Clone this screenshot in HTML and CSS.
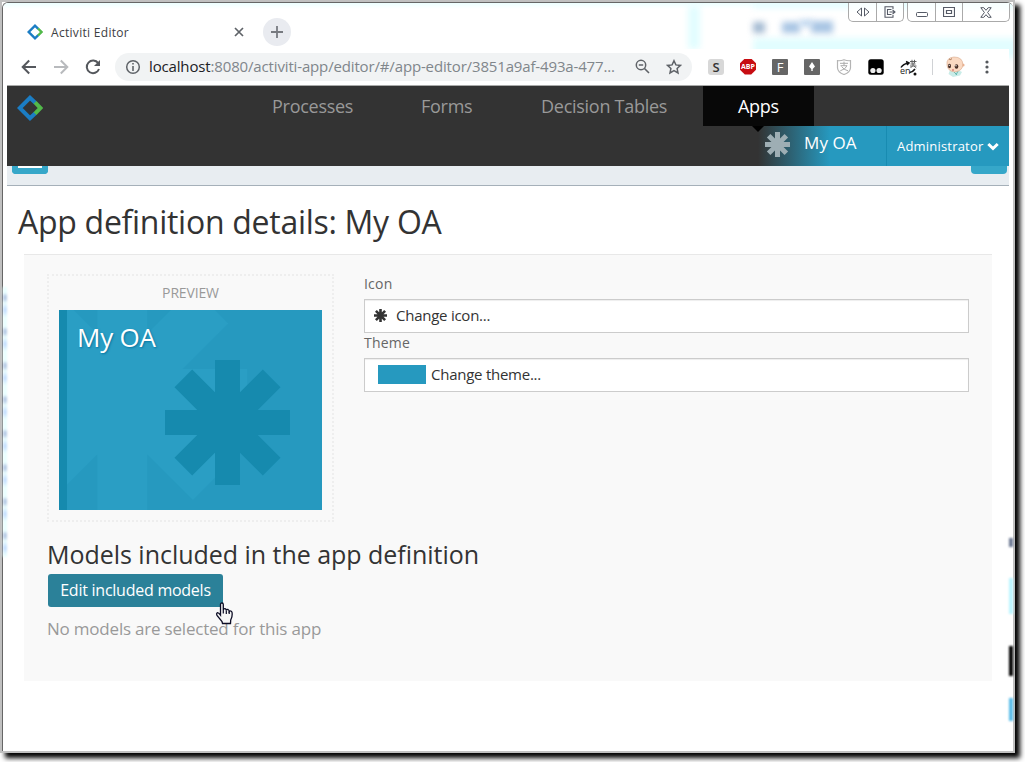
FILE: index.html
```html
<!DOCTYPE html>
<html lang="en">
<head>
<meta charset="utf-8">
<title>Activiti Editor</title>
<link rel="stylesheet" href="styles.css">
</head>
<body>
<svg class="defs" width="0" height="0">
  <symbol id="asterisk" viewBox="-62.5 -62.5 125 125">
    <path id="arms" d="M-12.5-62.5h25v125h-25zM-62.5-12.5h125v25h-125zM-53-35.3L-35.3-53L53 35.3L35.3 53zM35.3-53L53-35.3L-35.3 53L-53 35.3z"/>
  </symbol>
  <symbol id="logo" viewBox="0 0 26 26">
    <path d="M18.3 7.8L13 2.8L2.8 13L13 23.2L18.3 18.2" fill="none" stroke="#1b7dc4" stroke-width="4"/>
    <path d="M18 7.300L23.500 13L18 18.700" fill="none" stroke="#52b94a" stroke-width="4"/>
  </symbol>
</svg>
<div class="window">
  <div class="frame">
    <header class="titlebar">
      <div class="glass"><i class="g1"></i><i class="g2"></i><i class="g3"></i><i class="g4"></i><i class="g5"></i><i class="g6"></i><i class="g7"></i></div>
      <div class="tab">
        <svg class="fav" width="16" height="16"><use href="#logo"/></svg>
        <span class="tabname">Activiti Editor</span>
        <svg width="10" height="10" viewBox="0 0 10 10"><path d="M1 1l8 8M9 1L1 9" stroke="#5f6368" stroke-width="1.7"/></svg>
      </div>
      <div class="newtab"><svg width="14" height="14" viewBox="0 0 14 14"><path d="M7 1v12M1 7h12" stroke="#777a80" stroke-width="1.8"/></svg></div>
      <div class="controls">
        <div class="group">
          <span class="c1"><svg width="14" height="10" viewBox="0 0 14 10"><path d="M5.500 1v8L1 5zM8.500 1v8L13 5z" fill="#fff" stroke="#555a66"/></svg></span>
          <span class="c2"><svg width="12" height="12" viewBox="0 0 12 12"><path d="M9 3V.8H1v10.400h8V9M7.500 3.500h-4v5h4M5.500 6h5M8.500 3.800L11 6L8.500 8.200" fill="none" stroke="#555a66" stroke-width="1.100"/></svg></span>
        </div>
        <div class="group">
          <span class="c3"><svg width="12" height="12" viewBox="0 0 12 12"><rect x=".5" y="6.500" width="11" height="4" rx="1" fill="#fff" stroke="#555a66"/></svg></span>
          <span class="c2"><svg width="12" height="10" viewBox="0 0 12 10"><path d="M.5.5h11v9H.500zM3.500 3.500h5v3h-5z" fill="#fff" stroke="#555a66" stroke-width="1.200"/></svg></span>
          <span class="c4"><svg width="12" height="11" viewBox="0 0 12 11"><path d="M.8.7h3L6 3.300L8.200.7h3L7.600 5.500l3.600 4.800h-3L6 7.700l-2.200 2.600h-3L4.400 5.500z" fill="#fff" stroke="#555a66"/></svg></span>
        </div>
      </div>
    </header>
    <div class="toolbar">
      <svg class="back" width="16" height="16" viewBox="0 0 16 16"><path d="M15 8H2M8.200 1.500L1.700 8l6.500 6.500" fill="none" stroke="#55585d" stroke-width="2"/></svg>
      <svg class="fwd" width="16" height="16" viewBox="0 0 16 16"><path d="M1 8h13M7.800 1.500L14.300 8l-6.500 6.500" fill="none" stroke="#b8babd" stroke-width="2"/></svg>
      <svg class="reload" width="16" height="16" viewBox="0 0 16 16"><path d="M13.200 4.200A6.300 6.300 0 1 0 14 10" fill="none" stroke="#55585d" stroke-width="2"/><path d="M15 1v6H9z" fill="#55585d"/></svg>
      <div class="omnibox">
        <svg width="16" height="16" viewBox="0 0 16 16"><circle cx="8" cy="8" r="6.300" fill="none" stroke="#5f6368" stroke-width="1.500"/><path d="M8 7v5M8 4v1.600" stroke="#5f6368" stroke-width="1.600"/></svg>
        <span class="url"><b>localhost</b>:8080/activiti-app/editor/#/app-editor/3851a9af-493a-477...</span>
        <svg class="mag" width="15" height="15" viewBox="0 0 15 15"><circle cx="6" cy="6" r="4.700" fill="none" stroke="#5f6368" stroke-width="1.500"/><path d="M3.800 6h4.400M9.500 9.500L14 14" stroke="#5f6368" stroke-width="1.600"/></svg>
        <svg class="star" width="16" height="16" viewBox="0 0 16 16"><path d="M8 1.700l1.900 4.200l4.600.5l-3.400 3.100l.9 4.500l-4-2.300l-4 2.300l.9-4.500L1.500 6.400l4.600-.5z" fill="none" stroke="#5f6368" stroke-width="1.500"/></svg>
      </div>
      <div class="exts">
        <span class="ext s">S</span>
        <span class="ext abp">ABP</span>
        <span class="ext f">F</span>
        <span class="ext f"><svg width="16" height="16" viewBox="0 0 16 16"><path d="M8 3l3 4.500L8.700 10v2H7.300v-2L5 7.500z" fill="#fff"/></svg></span>
        <span class="ext shield"><svg width="16" height="16" viewBox="0 0 16 16"><path d="M1.500 1.700Q5 2 8 .7Q11 2 14.500 1.700V9Q14 13.500 8 15.500Q2 13.500 1.500 9z" fill="#fff" stroke="#b4b4b4" stroke-width="1.200"/><path d="M4 4.300h8M8 2.600v4M4.500 6.700h6.500Q10 10 4.300 11.800M5.500 7.500Q8 11 12 11.800" fill="none" stroke="#aaa"/></svg></span>
        <span class="ext"><svg width="16" height="16" viewBox="0 0 16 16"><rect x=".3" y=".3" width="15.400" height="15.400" rx="2.500" fill="#000"/><circle cx="4.900" cy="11.500" r="2.600" fill="#eee"/><circle cx="11.100" cy="11.500" r="2.600" fill="#eee"/></svg></span>
        <span class="ext tr"><svg width="17" height="18" viewBox="0 0 17 18"><path d="M10 2.500h6.500M12 .8v3.500M14.500.8v3.500M10.500 5h5M13 3.500v3.500M10 7h6.500M12.500 7l-2 2M14 7l2.300 2" fill="none" stroke="#555" stroke-width=".9"/><path d="M1 8.500Q3 5 8.500 4M6 2.500l3 1.500l-2 2M15 10Q13 13 9.500 13.500" fill="none" stroke="#111" stroke-width="1.500"/><circle cx="15" cy="15" r="1.500" fill="#111"/></svg><em>en</em></span>
        <i class="vline"></i>
        <svg class="avatar" width="20" height="22" viewBox="0 0 20 22"><path d="M5 14L3.500 18L8 21L15 19.500L17 16l-4-2z" fill="#c9ece8"/><path d="M9 16l3 3M13 15l-2 4" stroke="#65b8b0"/><circle cx="18" cy="9" r="1.600" fill="#edb392"/><path d="M2 9Q1 1.500 9 1Q18 1 17.800 9Q17.500 15 9.500 16Q2.500 15 2 9z" fill="#fad9c2" stroke="#d9a98b" stroke-width=".6"/><path d="M4 3q2 1.500 3-.5" fill="none" stroke="#a87858"/><ellipse cx="4.500" cy="10" rx="1.500" ry="2.200" fill="#4a3028"/><ellipse cx="11.500" cy="10.500" rx="1.800" ry="2.200" fill="#4a3028"/><circle cx="4.300" cy="9.300" r=".6" fill="#fff"/><circle cx="11" cy="9.700" r=".7" fill="#fff"/><path d="M7 14h2" stroke="#c55"/></svg>
        <svg class="dots" width="4" height="14" viewBox="0 0 4 14"><g fill="#55585d"><circle cx="2" cy="2" r="1.600"/><circle cx="2" cy="7" r="1.600"/><circle cx="2" cy="12" r="1.600"/></g></svg>
      </div>
    </div>
    <div class="page">
      <nav class="topnav">
        <svg class="brand" width="26" height="26"><use href="#logo"/></svg>
        <a class="n1"><span>Processes</span></a><a class="n2"><span>Forms</span></a><a class="n3"><span>Decision Tables</span></a><a class="n4 active"><span>Apps</span></a>
      </nav>
      <div class="subnav">
        <div class="appname"><svg width="25" height="25"><use href="#asterisk"/></svg><span>My OA</span></div>
        <div class="user"><span>Administrator</span><svg width="12" height="9" viewBox="0 0 12 9"><path d="M1.300 2L6 6.500L10.700 2" fill="none" stroke="#fff" stroke-width="3"/></svg></div>
      </div>
      <div class="actions"><i class="left"></i><i></i></div>
      <h1><span>App definition details: My OA</span></h1>
      <main class="panel">
        <div class="details">
          <div class="preview">
            <div class="ptitle"><span>PREVIEW</span></div>
            <div class="card">
              <svg width="263" height="200" viewBox="0 0 263 200"><use href="#arms" transform="translate(63.300 84) scale(2)" fill="#2a9ec4"/><path d="M0 0h8v200H0z" fill="#168aae"/><use href="#arms" transform="translate(168.500 112.500)" fill="#168aae"/></svg>
              <span>My OA</span>
            </div>
          </div>
          <div class="form">
            <label><span class="l1">Icon</span></label>
            <div class="field"><svg class="ico" width="13" height="13"><use href="#asterisk"/></svg><span class="f1">Change icon...</span></div>
            <label class="second"><span class="l2">Theme</span></label>
            <div class="field"><i class="swatch"></i><span class="f2">Change theme...</span></div>
          </div>
        </div>
        <h2><span>Models included in the app definition</span></h2>
        <button><span>Edit included models</span></button>
        <p><span>No models are selected for this app</span></p>
      </main>
    </div>
  </div>
  <div class="edge"><i class="e1"></i><i class="e2"></i><i class="e3"></i><i class="e4"></i><i class="e5"></i></div>
  <svg class="cursor" width="19" height="23" viewBox="0 0 19 23"><path d="M5.500 13V2.500Q5.500 1 7 1Q8.300 1 8.300 2.500V8Q8.500 6.500 10 6.700Q11.300 7 11.300 8.500Q11.500 7.300 13 7.500Q14.200 8 14.200 9.500Q15 8.500 16.300 9.200Q17.300 10 17.200 12Q17.300 15 15.700 18L15.500 21.500H7.500L7 19.500L2 13.500Q1 11.500 2.200 10.700Q3.600 10.500 5.500 13z" fill="#f6f6f6" stroke="#0c0c24" stroke-width="1.300"/><path d="M8.300 8v3.500M11.300 8.500V12M14.200 9.500V12" stroke="#0c0c24" stroke-width="1.200"/></svg>
</div>
</body>
</html>
```

FILE: styles.css
```css
* { box-sizing: border-box; }
body { margin: 0; width: 1025px; height: 762px; overflow: hidden; background: #fff; font-family: "Open Sans", "Noto Sans", sans-serif; }
svg { display: block; flex: none; }
i, em, b { font-style: normal; font-weight: normal; }
span { white-space: nowrap; }
.defs { position: absolute; }
.window { position: relative; width: 1015px; height: 753px; border: 2px solid #c0c0c0; box-shadow: 5px 5px 5px 0 #000; }
.frame { height: 749px; border: 1px solid #666; border-right: 0; border-bottom: 0; border-radius: 6px 6px 0 0; background: #fff; overflow: hidden; }

.titlebar { position: relative; display: flex; height: 46px; background: linear-gradient(#edffff, #fff 6px); }
.glass i { position: absolute; filter: blur(3px); background: #e2fdff; }
.glass .g1 { left: 685px; top: 3px; width: 12px; height: 43px; }
.glass .g2 { left: 750px; top: 35px; width: 270px; height: 20px; }
.glass .g3 { left: 750px; top: 0; width: 270px; height: 5px; }
.glass .g4 { left: 750px; top: 19px; width: 12px; height: 11px; background: #a3bad2; }
.glass .g5 { left: 779px; top: 19px; width: 18px; height: 11px; background: #a8c5e4; }
.glass .g6 { left: 797px; top: 17px; width: 12px; height: 6px; background: #b4d0ec; }
.glass .g7 { left: 808px; top: 18px; width: 22px; height: 12px; background: #a8c5e4; }
.tab { position: relative; display: flex; align-items: center; width: 217px; height: 18px; margin: 20px 0 0 24px; }
.tabname { flex: 1; margin-left: 8px; font-size: 12px; letter-spacing: .3px; color: #3c4043; }
.newtab { position: relative; display: grid; place-items: center; width: 28px; height: 28px; margin: 15px 0 0 19px; border-radius: 50%; background: #e9ebf0; }
.controls { position: relative; display: flex; gap: 3px; margin: 0 3px 0 auto; height: 19px; }
.group { display: flex; border: 1px solid #aaa; border-top: 0; border-radius: 0 0 5px 5px; background: #ffffffb0; overflow: hidden; }
.group span { display: grid; place-items: center; border-left: 1px solid #aaa; }
.group span:first-child { border-left: 0; }
.c1, .c3 { width: 27px; } .c2 { width: 27px; } .c4 { width: 47px; }

.toolbar { position: relative; display: flex; align-items: center; width: 1002px; height: 37px; margin-left: 4px; padding-bottom: 1px; border-bottom: 1px solid #a9aaa9; background: #fff; }
.back { margin-left: 14px; } .fwd, .reload { margin-left: 16px; }
.omnibox { display: flex; align-items: center; width: 577px; height: 28px; margin-left: 14px; padding-left: 10px; border-radius: 14px; background: #f1f3f4; }
.url { width: 466px; margin-left: 8px; font-size: 15px; letter-spacing: -.15px; line-height: 20px; padding-bottom: 1px; color: #80868b; }
.url b { color: #202124; }
.mag { margin-left: 20px; } .star { margin-left: 16px; }
.exts { display: flex; align-items: center; gap: 16px; margin-left: 16px; }
.ext { display: grid; place-items: center; width: 16px; height: 16px; font-size: 13px; line-height: 16px; }
.s { border-radius: 3px; background: #d8d8d8; color: #333; font-weight: 600; }
.abp { background: #c70d12; color: #fff; font-size: 7px; font-weight: 700; clip-path: polygon(30% 0, 70% 0, 100% 30%, 100% 70%, 70% 100%, 30% 100%, 0 70%, 0 30%); }
.f { border-radius: 1px; background: #666; color: #fff; }
.tr { position: relative; }
.tr em { position: absolute; left: 0; top: 7px; font-size: 9px; line-height: 10px; color: #222; }
.vline { width: 1px; height: 16px; background: #d0d2d5; }
.avatar { margin-left: -4px; } .dots { margin-left: 4px; }

.page { width: 1002px; height: 664px; margin-left: 4px; background: #fff; }
.topnav { display: flex; height: 40px; background: #333; }
.brand { margin: 9px 194px 0 10px; }
.topnav a { height: 40px; padding-left: 35px; color: #999; font-size: 18px; letter-spacing: -.27px; line-height: 41px; }
.n1 { width: 149px; } .n2 { width: 120px; } .n3 { width: 197px; } .n4 { width: 111px; }
.topnav .active { position: relative; background: #080808; color: #fff; }
.active::after { content: ""; position: absolute; left: 49px; top: 40px; border: 6px solid transparent; border-top-color: #000; border-bottom: 0; }
.subnav { display: flex; height: 40px; padding-left: 751px; background: #333; color: #fff; }
.appname { display: flex; width: 128px; padding: 6px 0 0 7px; background: linear-gradient(90deg, #333, #2699bf 72px); font-size: 17px; line-height: 21px; letter-spacing: .1px; }
.appname svg { fill: #9eaeb4; } .appname span { margin-left: 14px; }
.user { display: flex; align-items: center; flex: 1; padding-left: 10px; border-left: 1px solid #188bb1; background: #2699bf; font-size: 13px; letter-spacing: .2px; }
.user svg { margin-left: 4px; }
.actions { display: flex; justify-content: space-between; height: 20px; padding: 0 2px 0 5px; border-bottom: 1px solid #a5b0b9; background: #e8edf1; }
.actions i { width: 36px; height: 8px; border-radius: 0 0 4px 4px; background: #36a7c9; }
.actions .left { border: solid #36a7c9; border-width: 0 6px 6px; background: #fff; }
h1 { height: 68px; margin: 0; padding: 12px 0 0 11px; font-size: 32px; letter-spacing: -.28px; line-height: 48px; font-weight: 400; color: #333; }
.panel { width: 968px; height: 427px; margin-left: 17px; padding: 20px 23px 0; border-top: 1px solid #e8e8e8; background: #f9f9f9; }
.details { display: flex; height: 260px; }
.preview { width: 287px; height: 248px; padding: 0 10px; border: 2px dotted #eee; margin-top: -1px; }
.ptitle { height: 34px; padding-top: 8px; text-align: center; font-size: 14px; letter-spacing: -.15px; line-height: 18px; color: #999; }
.card { position: relative; width: 263px; height: 200px; background: #2699bf; }
.card span { position: absolute; left: 18px; top: 9px; font-size: 26px; letter-spacing: -.2px; line-height: 36px; color: #fff; text-shadow: 1px 1px 2px #0875a0; }
.form { width: 605px; margin-left: 30px; }
label { display: block; height: 24px; font-size: 14px; letter-spacing: .2px; line-height: 18px; color: #666; }
label.second { height: 25px; line-height: 20px; }
.field { display: flex; align-items: center; height: 34px; border: 1px solid #ccc; background: #fff; font-size: 15px; letter-spacing: -.25px; color: #333; box-shadow: inset 0 1px 1px #00000012; }
.field span { padding-bottom: 2px; }
.ico { margin: -2px 9px 0 9px; fill: #333; }
.swatch { width: 48px; height: 19px; margin: -1px 5px 0 13px; background: #2699bf; }
h2 { height: 39px; margin: 0; font-size: 25px; letter-spacing: -.03px; line-height: 39px; font-weight: 400; color: #333; }
button { display: block; width: 175px; height: 33px; margin: 0 0 0 1px; padding: 0; border: 0; border-radius: 3px; background: #2b8199; color: #fff; font: 16px/31px "Open Sans", sans-serif; letter-spacing: -.25px; }
p { margin: 8px 0 0; font-size: 17px; letter-spacing: -.21px; line-height: 27px; color: #999; }
.edge i { position: absolute; left: 1007px; width: 4px; filter: blur(1px); }
.edge .e1 { top: 536px; height: 9px; background: #6c7892; }
.edge .e2 { top: 576px; height: 36px; background: #baf5ff; }
.edge .e3 { top: 644px; height: 30px; background: #000; }
.edge .e4 { top: 696px; height: 23px; background: #57bce9; }
.edge .e5 { left: 1px; width: 4px; top: 285px; height: 270px; background: repeating-linear-gradient(#eaffff 0 6px, #b6cbe6 9px 12px, #eaffff 16px, #c0dcff 23px, #eaffff 30px 34px); }
.cursor { position: absolute; left: 213px; top: 600px; }
```
